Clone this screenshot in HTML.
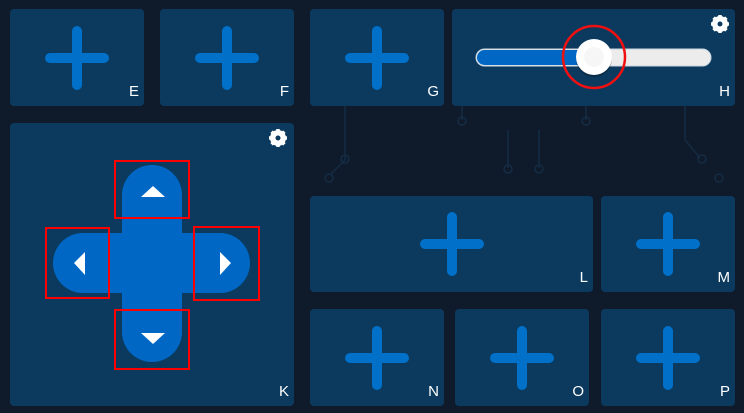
<!DOCTYPE html>
<html><head><style>
body{margin:0;width:744px;height:413px;background:#0f1a2b;position:relative;overflow:hidden;font-family:"Liberation Sans",sans-serif}
.c{position:absolute;background:#0b3a5e;border-radius:4px}
.l{position:absolute;right:5px;bottom:7px;color:#fff;font-size:15px;line-height:15px}
.p{position:absolute;left:50%;top:50%;width:64px;height:64px;margin:-32px 0 0 -32px;overflow:visible}
.rb{position:absolute;border:2px solid #f00;box-sizing:border-box}
</style></head><body>
<svg style="position:absolute;left:0;top:0" width="744" height="413" fill="none" stroke="#142c44" stroke-width="1.5">
<path d="M345 106 V160 L330 175"/><circle cx="345" cy="159" r="4"/>
<path d="M462 106 V120"/><circle cx="462" cy="121" r="4"/>
<path d="M586 106 V120"/><circle cx="586" cy="121" r="4"/>
<path d="M508 130 V168 M539 130 V168"/><circle cx="508" cy="169" r="4"/><circle cx="539" cy="169" r="4"/>
<path d="M685 106 V140 L700 158"/><circle cx="702" cy="159" r="4"/><circle cx="719" cy="178" r="4"/>
<circle cx="329" cy="178" r="4"/>
</svg>
<svg width="0" height="0" style="position:absolute"><defs><g id="pl"><path d="M32 5V59M5 32H59" stroke="#0070c9" stroke-width="10" stroke-linecap="round"/></g></defs></svg>

<div class="c" style="left:10px;top:9px;width:134px;height:97px"><svg class="p"><use href="#pl"/></svg><span class="l">E</span></div>
<div class="c" style="left:160px;top:9px;width:134px;height:97px"><svg class="p"><use href="#pl"/></svg><span class="l">F</span></div>
<div class="c" style="left:310px;top:9px;width:134px;height:97px"><svg class="p"><use href="#pl"/></svg><span class="l">G</span></div>
<div class="c" style="left:452px;top:9px;width:283px;height:97px"><span class="l">H</span></div>

<div class="c" style="left:310px;top:196px;width:283px;height:96px"><svg class="p"><use href="#pl"/></svg><span class="l">L</span></div>
<div class="c" style="left:601px;top:196px;width:134px;height:96px"><svg class="p"><use href="#pl"/></svg><span class="l">M</span></div>
<div class="c" style="left:310px;top:309px;width:134px;height:97px"><svg class="p"><use href="#pl"/></svg><span class="l">N</span></div>
<div class="c" style="left:455px;top:309px;width:134px;height:97px"><svg class="p"><use href="#pl"/></svg><span class="l">O</span></div>
<div class="c" style="left:601px;top:309px;width:134px;height:97px"><svg class="p"><use href="#pl"/></svg><span class="l">P</span></div>

<div class="c" style="left:10px;top:123px;width:284px;height:283px"><span class="l">K</span></div>

<svg style="position:absolute;left:0;top:0" width="744" height="413">
<defs><g id="gear"><circle r="6" fill="none" stroke="#fff" stroke-width="4"/><g stroke="#fff" stroke-width="3.5"><path d="M0-9V9M-9 0H9M-6.4-6.4L6.4 6.4M-6.4 6.4L6.4-6.4"/></g><circle r="2.5" fill="#0b3a5e"/></g></defs>
<use href="#gear" x="278" y="138"/>
<use href="#gear" x="720" y="24"/>
<rect x="476" y="49" width="235" height="17" rx="8.5" fill="#ececec" stroke="#c8d4de"/>
<rect x="477" y="50" width="120" height="15" rx="7.5" fill="#0068c4"/>
<circle cx="594" cy="59" r="18" fill="#000" opacity="0.25"/>
<circle cx="594" cy="57" r="18" fill="#fff"/>
<circle cx="594" cy="57" r="10" fill="#f6f6f6"/>
<circle cx="594" cy="57" r="31" fill="none" stroke="#f01010" stroke-width="2.5"/>
<g fill="#0068c4">
<rect x="122" y="165" width="60" height="197" rx="30"/>
<rect x="53" y="233" width="197" height="60" rx="30"/>
</g>
<g fill="#fff">
<path d="M141 197H165L153 186Z"/>
<path d="M141 333H165L153 344Z"/>
<path d="M85 252V275L74 263Z"/>
<path d="M220 252V275L231 263Z"/>
</g>
</svg>
<div class="rb" style="left:114px;top:160px;width:76px;height:59px"></div>
<div class="rb" style="left:45px;top:227px;width:65px;height:72px"></div>
<div class="rb" style="left:193px;top:226px;width:67px;height:75px"></div>
<div class="rb" style="left:114px;top:309px;width:76px;height:61px"></div>
</body></html>
